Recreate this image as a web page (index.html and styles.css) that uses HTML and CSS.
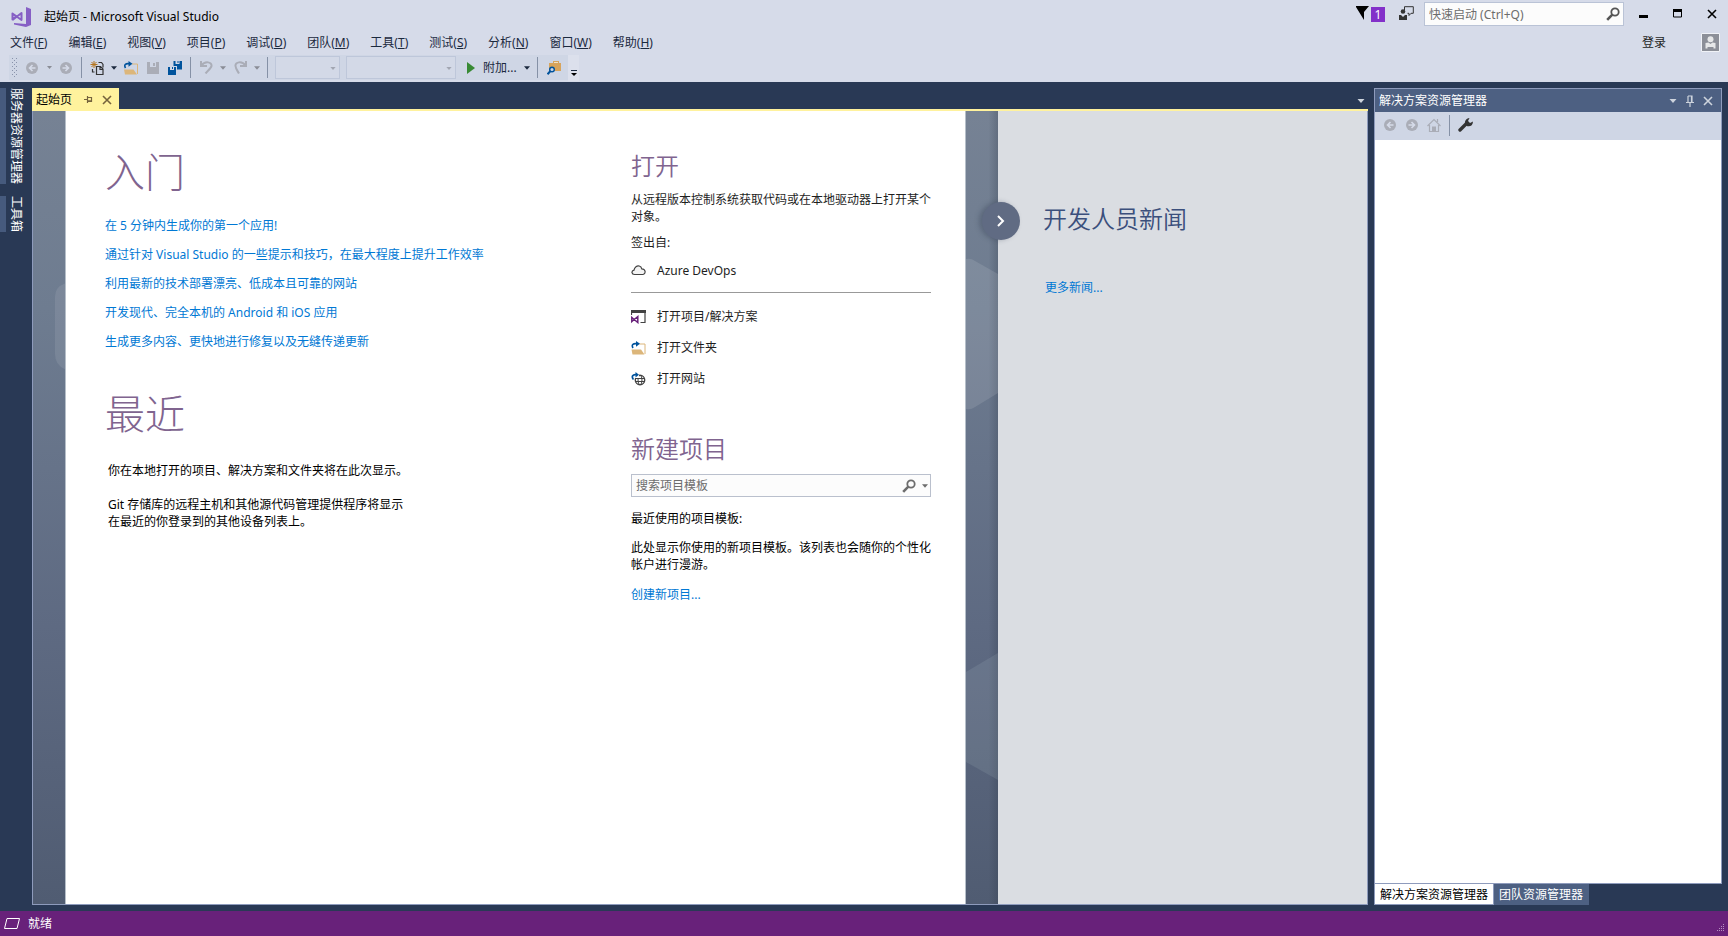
FILE: index.html
```html
<!DOCTYPE html>
<html lang="zh-CN">
<head>
<meta charset="utf-8">
<title>起始页 - Microsoft Visual Studio</title>
<link rel="stylesheet" href="styles.css">
</head>
<body>
<svg class="defs" width="0" height="0" aria-hidden="true">
  <symbol id="caret" viewBox="0 0 7 4"><path d="M0 0h7L3.500 4z" fill="currentColor"/></symbol>
  <symbol id="search" viewBox="0 0 14 14"><circle cx="9" cy="5" r="3.700" fill="none" stroke="currentColor" stroke-width="1.800"/><path d="M6.300 7.700L1.200 12.800" stroke="currentColor" stroke-width="2.600"/></symbol>
  <symbol id="back" viewBox="0 0 12 12"><circle cx="6" cy="6" r="6" fill="#aaadb7"/><path d="M6.500 3L3.500 6l3 3M3.500 6H9.500" fill="none" stroke="#d6dbe9" stroke-width="1.600"/></symbol>
  <symbol id="forward" viewBox="0 0 12 12"><circle cx="6" cy="6" r="6" fill="#aaadb7"/><path d="M5.500 3l3 3-3 3M8.500 6H2.500" fill="none" stroke="#d6dbe9" stroke-width="1.600"/></symbol>
  <symbol id="open-folder" viewBox="0 0 14 14"><path d="M8 3h5.500v10" fill="none" stroke="#dcb67a"/><path d="M0 8.500h9.500L13 13.500H1z" fill="#dcb67a"/><path d="M1.500 7C-.5 3.500 2 2.200 5.500 2.800" fill="none" stroke="#00539c" stroke-width="1.600"/><path d="M4.500 0l4 2.800-4 3z" fill="#00539c"/></symbol>
  <symbol id="close" viewBox="0 0 10 10"><path d="M1 1l8 8M9 1L1 9" fill="none" stroke="currentColor" stroke-width="1.600"/></symbol>
  <symbol id="pin" viewBox="0 0 8 12"><path d="M2 1h4v6M2 1v6M5.500 1v6M0 7.500h8M4 8v4" fill="none" stroke="currentColor" stroke-width="1.200"/></symbol>
</svg>

<header class="header">
  <div class="title-row">
    <svg class="logo" width="20" height="20" viewBox="0 0 20 20"><path d="M15 0l5 2v16l-5 2-12-2.500V16l12 1z" fill="#865fc5"/><path d="M1.500 6.500v6l3.500-3zM1.500 6.500l9 6.500V6l-9 7" fill="none" stroke="#865fc5" stroke-width="2" stroke-linejoin="round"/></svg>
    <span class="app-title">起始页 - Microsoft Visual Studio</span>
    <button class="plain flag" aria-label="通知"><svg width="13" height="14" viewBox="0 0 13 14"><path d="M0 0h13L8 6v8L0 1z"/></svg><span class="badge">1</span></button>
    <button class="plain feedback" aria-label="反馈"><svg width="15" height="15" viewBox="0 0 15 15"><path d="M5.500 4V.700h8.800v6.600H12l-2 2.200V7.300H8.500" fill="none" stroke="#333"/><circle cx="4" cy="5.500" r="2.300" fill="#333"/><path d="M0 9h2l2 2 2-2h2v5H0z" fill="#333"/></svg></button>
    <label class="quick"><input type="text" placeholder="快速启动 (Ctrl+Q)" aria-label="快速启动"><svg width="14" height="14"><use href="#search"/></svg></label>
    <div class="window-buttons">
      <button class="plain" aria-label="最小化"><svg width="10" height="10"><path d="M0 6h9v3H0z"/></svg></button>
      <button class="plain" aria-label="最大化"><svg width="10" height="10"><path d="M.5 1h8v7h-8z" fill="none" stroke="#000"/><path d="M0 0h9v3H0z"/></svg></button>
      <button class="plain" aria-label="关闭"><svg width="10" height="10"><use href="#close"/></svg></button>
    </div>
  </div>
  <div class="menu-row">
    <nav class="menu">
      <button>文件(<u>F</u>)</button><button>编辑(<u>E</u>)</button><button>视图(<u>V</u>)</button><button>项目(<u>P</u>)</button><button>调试(<u>D</u>)</button><button>团队(<u>M</u>)</button><button>工具(<u>T</u>)</button><button>测试(<u>S</u>)</button><button>分析(<u>N</u>)</button><button>窗口(<u>W</u>)</button><button>帮助(<u>H</u>)</button>
    </nav>
    <button class="plain sign-in">登录</button>
    <svg class="avatar" width="19" height="19" viewBox="0 0 19 19"><path d="M.5.500h18v18H.5z" fill="#8c8f98" stroke="#f0f2f7"/><circle cx="9.500" cy="6.200" r="3" fill="#e6e7e8"/><path d="M4.500 15.500V10l3-.5 2 1.500 2-1.500 3 .5v5.500h-2V14h-6v1.500z" fill="#e6e7e8"/></svg>
  </div>
  <div class="toolbar-row">
    <div class="toolbar">
      <svg class="grip" width="5" height="20"><path d="M.5 0v20M4.500 0v20M2.500 2v18" stroke="#8993ab" stroke-dasharray="1 3"/></svg>
      <button class="tool" aria-label="后退"><svg width="12" height="12"><use href="#back"/></svg></button>
      <button class="drop dim" aria-label="后退列表"><svg width="5" height="3"><use href="#caret"/></svg></button>
      <button class="tool" aria-label="前进"><svg width="12" height="12"><use href="#forward"/></svg></button>
      <i class="sep"></i>
      <button class="tool" aria-label="新建"><svg width="14" height="14" viewBox="0 0 14 14"><path d="M4 0v7M.5 3.500h7M1.500 1l5 5M6.500 1l-5 5" stroke="#b5751e"/><path d="M8.500 1.500h3l1.500 2v3M2.500 8v3h2M6.500 5.500h4l2.500 2.500v5.500H6.500zM10 6v2.500h3" fill="none" stroke="#333" stroke-width="1.200"/></svg></button>
      <button class="drop" aria-label="新建列表"><svg width="6" height="4"><use href="#caret"/></svg></button>
      <button class="tool" aria-label="打开"><svg width="14" height="14"><use href="#open-folder"/></svg></button>
      <button class="tool" aria-label="保存"><svg width="12" height="12"><path d="M0 0h12v12H0z" fill="#aaadb7"/><path d="M3 0h6v5H3z" fill="#cfd6e5"/><path d="M3 8h6v4H3z" fill="#aaadb7"/><path d="M6 1h2v3H6z" fill="#aaadb7"/></svg></button>
      <button class="tool" aria-label="全部保存"><svg width="14" height="14"><path d="M5.500 0H14v8.500H9V5H5.500zM0 6h8v8H0z" fill="#00539c"/><path d="M7.500 0h4v3h-4zM2 6h4v3H2z" fill="#cfd6e5"/><path d="M9.500 0h1v2h-1zM4 6h1v2H4z" fill="#00539c"/></svg></button>
      <i class="sep"></i>
      <button class="tool" aria-label="撤消"><svg width="13" height="13"><path d="M1 0v5h6M1.500 4.500C5-.500 12 1 11.500 5c-.3 2-3 4-6 7.500" fill="none" stroke="#aaadb7" stroke-width="2"/></svg></button>
      <button class="drop dim" aria-label="撤消列表"><svg width="6" height="4"><use href="#caret"/></svg></button>
      <button class="tool" aria-label="重做"><svg width="13" height="13"><path d="M12 0v5H6M11.500 4.500C8-.500 1 1 1.500 5c.2 2.500 1.500 4 3.500 7.500" fill="none" stroke="#aaadb7" stroke-width="2"/></svg></button>
      <button class="drop dim" aria-label="重做列表"><svg width="6" height="4"><use href="#caret"/></svg></button>
      <i class="sep"></i>
      <span class="combo narrow"><select disabled aria-label="解决方案配置"></select><svg width="6" height="3"><use href="#caret"/></svg></span>
      <span class="combo wide"><select disabled aria-label="解决方案平台"></select><svg width="6" height="3"><use href="#caret"/></svg></span>
      <button class="attach"><svg width="8" height="12"><path d="M0 0l8 6-8 6z" fill="#388a34"/></svg>附加...</button>
      <button class="drop" aria-label="附加列表"><svg width="6" height="4"><use href="#caret"/></svg></button>
      <i class="sep"></i>
      <button class="tool find" aria-label="在文件中查找"><svg width="14" height="14"><path d="M2 2h4V0h6v2h2v8H2z" fill="#d8a45c"/><path d="M7 1.500h4" stroke="#f1e3c8"/><circle cx="5" cy="8.500" r="2.300" fill="#cfd6e5" stroke="#00539c" stroke-width="1.400"/><path d="M3.500 10L.5 13.300" stroke="#00539c" stroke-width="2"/></svg></button>
    </div>
    <button class="overflow" aria-label="工具栏选项"><svg width="6" height="6"><path d="M0 .500h6" stroke="#1b293e"/><path d="M0 3h6L3 6z"/></svg></button>
  </div>
</header>

<div class="workspace">
  <aside class="dock">
    <button>服务器资源管理器</button>
    <button>工具箱</button>
  </aside>

  <main class="document">
    <div class="tabs">
      <div class="tab">
        <span>起始页</span>
        <button class="plain" aria-label="固定"><svg width="9" height="7"><path d="M0 3.500h3M3.500 0v7M3.500 1.500h4v4h-4M3.500 4.800h4" fill="none" stroke="#75633d" stroke-width="1.200"/></svg></button>
        <button class="plain" aria-label="关闭"><svg width="10" height="10"><use href="#close"/></svg></button>
      </div>
      <button class="plain tab-list" aria-label="文档列表"><svg width="8" height="4"><use href="#caret"/></svg></button>
    </div>
    <div class="canvas">
      <div class="gutter">
        <svg width="33" height="300"><path d="M34 172q-12 3-12 14v57q0 12 12 16z" fill="#fff" opacity=".09"/></svg>
      </div>
      <div class="page">
        <div class="column">
          <h1>入门</h1>
          <ul class="links">
            <li><a href="#">在 5 分钟内生成你的第一个应用!</a></li>
            <li><a href="#">通过针对 Visual Studio 的一些提示和技巧，在最大程度上提升工作效率</a></li>
            <li><a href="#">利用最新的技术部署漂亮、低成本且可靠的网站</a></li>
            <li><a href="#">开发现代、完全本机的 Android 和 iOS 应用</a></li>
            <li><a href="#">生成更多内容、更快地进行修复以及无缝传递更新</a></li>
          </ul>
          <h1 class="recent">最近</h1>
          <div class="recent-text">
            <p>你在本地打开的项目、解决方案和文件夹将在此次显示。</p>
            <p>Git 存储库的远程主机和其他源代码管理提供程序将显示<br>在最近的你登录到的其他设备列表上。</p>
          </div>
        </div>
        <div class="column side">
          <h2>打开</h2>
          <p class="intro">从远程版本控制系统获取代码或在本地驱动器上打开某个对象。</p>
          <p>签出自:</p>
          <button class="item azure"><svg width="15" height="11" viewBox="0 0 15 11"><path d="M3.500 9.500C.5 9.500 0 6 3 5.200 3.500 2 6 .500 8.200 1c1.600.4 2.300 1.600 2.600 2.800C15 4 15 9 12 9.500z" fill="#f3f3f3" stroke="#424242" stroke-width="1.200"/></svg>Azure DevOps</button>
          <hr>
          <div class="items">
            <button class="item"><svg width="15" height="14"><path d="M.500 5V1.500M14 1.500v11H9.500" fill="none" stroke="#424242" stroke-width="1.200"/><path d="M0 0h15v3H0z" fill="#424242"/><path d="M.8 7.500v4l2.200-2zM.8 7.500l6 5v-6l-6 5" fill="none" stroke="#68217a" stroke-width="1.500"/></svg>打开项目/解决方案</button>
            <button class="item"><svg width="15" height="14"><use href="#open-folder"/></svg>打开文件夹</button>
            <button class="item"><svg width="15" height="14"><circle cx="9" cy="8" r="4.700" fill="none" stroke="#424242" stroke-width="1.400"/><ellipse cx="9" cy="8" rx="2" ry="4.700" fill="none" stroke="#424242"/><path d="M4 6.500h10M4 9.500h10" stroke="#424242"/><path d="M0 0h8v6H0z" fill="#fff"/><path d="M2.500 7.500C0 4.500 2 2.300 5 2.700" fill="none" stroke="#00539c" stroke-width="1.700"/><path d="M4.500 0l3.500 2.700-3.500 2.700z" fill="#00539c"/></svg>打开网站</button>
          </div>
          <h2 class="new">新建项目</h2>
          <label class="template"><input type="text" placeholder="搜索项目模板" aria-label="搜索项目模板"><svg width="14" height="14"><use href="#search"/></svg><svg width="6" height="4"><use href="#caret"/></svg></label>
          <p>最近使用的项目模板:</p>
          <p class="roam">此处显示你使用的新项目模板。该列表也会随你的个性化帐户进行漫游。</p>
          <a class="create" href="#">创建新项目...</a>
        </div>
      </div>
      <div class="gutter right">
        <svg width="32" height="700"><path d="M0 148q5-1 9 2l23 13v119L9 296q-4 3-9 2z" fill="#fff" opacity=".11"/><path d="M0 561l32-19v127L0 651z" fill="#cfe0e0" opacity=".11"/></svg>
      </div>
      <section class="news">
        <button class="collapse" aria-label="折叠新闻"><svg width="8" height="12"><path d="M1 1l5 5-5 5" fill="none" stroke="#fff" stroke-width="2"/></svg></button>
        <h2>开发人员新闻</h2>
        <a href="#">更多新闻...</a>
      </section>
    </div>
  </main>

  <aside class="explorer">
    <div class="explorer-frame">
      <div class="explorer-title">
        <span>解决方案资源管理器</span>
        <button class="plain" aria-label="窗口位置"><svg width="8" height="4"><use href="#caret"/></svg></button>
        <button class="plain" aria-label="自动隐藏"><svg width="8" height="12"><use href="#pin"/></svg></button>
        <button class="plain" aria-label="关闭"><svg width="10" height="10"><use href="#close"/></svg></button>
      </div>
      <div class="explorer-tools">
        <button class="tool" aria-label="后退"><svg width="12" height="12"><use href="#back"/></svg></button>
        <button class="tool" aria-label="前进"><svg width="12" height="12"><use href="#forward"/></svg></button>
        <button class="tool" aria-label="主页"><svg width="14" height="14"><path d="M.5 8L7 1.500 13.500 8M2.500 7v6.500h9V7M10.500 4V1" fill="none" stroke="#aaadb7" stroke-width="1.200"/><path d="M5 8.500h4V13H5z" fill="#aaadb7"/></svg></button>
        <i class="sep"></i>
        <button class="tool" aria-label="属性"><svg width="15" height="14"><path d="M9 5L2 12" stroke="#333" stroke-width="3.400" stroke-linecap="round"/><path d="M11.500 0L10 3l2 2 3-1.500C15 8 11 9.500 8 7.500 5.500 4 8 0 11.500 0z" fill="#333"/></svg></button>
      </div>
      <div class="explorer-body"></div>
    </div>
    <div class="explorer-tabs">
      <button class="active">解决方案资源管理器</button><button>团队资源管理器</button>
    </div>
  </aside>
</div>

<footer class="status">
  <svg width="16" height="11"><path d="M3 .500h12.500L13 10.500H.500z" fill="none" stroke="#fff"/></svg>
  <span>就绪</span>
  <svg class="resize" width="8" height="8"><path d="M7.500 0v8M5.500 2v6M3.500 4v4M1.500 6v2" stroke="#b68fc0" stroke-dasharray="1 1"/></svg>
</footer>
</body>
</html>
```
FILE: styles.css
```css
* { box-sizing: border-box; }

body {
  margin: 0;
  height: 100vh;
  display: flex;
  flex-direction: column;
  font-family: "Noto Sans", "Noto Sans CJK SC", sans-serif;
  font-size: 12px;
  line-height: 17px;
  color: #1e1e1e;
  background: #293955;
  overflow: hidden;
}

.defs { position: absolute; }
svg { flex: none; display: block; }
h1, h2, p, ul { margin: 0; padding: 0; }
button {
  font: inherit;
  color: inherit;
  padding: 0;
  border: 0;
  background: none;
  white-space: nowrap;
}
input { font: inherit; border: 0; padding: 0; background: none; outline: 0; min-width: 0; flex: 1; }
input::placeholder { color: #6d6d6d; opacity: 1; }
a { color: #0078d4; text-decoration: none; }
.plain, .tool, .drop { display: flex; align-items: center; justify-content: center; flex: none; }

/* Header */
.header { background: #d6dbe9; height: 82px; flex: none; color: #1b293e; }
.title-row { display: flex; align-items: center; height: 32px; padding: 0 11px; color: #000; }
.app-title { margin-left: 13px; flex: 1; }
.logo { margin-top: 2px; }
.flag { align-items: flex-start; gap: 2px; margin-bottom: 4px; }
.badge {
  width: 14px;
  height: 15px;
  margin-top: 1px;
  line-height: 15px;
  color: #fff;
  background: #8330c9;
}
.feedback { margin: 0 10px 6px 14px; }
.quick {
  display: flex;
  align-items: center;
  width: 200px;
  height: 24px;
  margin-bottom: 4px;
  padding: 0 3px 0 4px;
  border: 1px solid #bac3d6;
  background: #fcfcfc;
  color: #555;
}
.window-buttons { display: flex; gap: 24px; margin: 0 0 4px 15px; }
.menu-row { display: flex; align-items: center; height: 20px; padding: 0 8px 0 10px; }
.menu { display: flex; flex: 1; gap: 21px; }
.sign-in { color: #1e1e1e; }
.avatar { margin-left: 35px; }

.toolbar-row { display: flex; height: 27px; margin: 3px 0 0 9px; }
.toolbar { display: flex; align-items: center; height: 25px; padding: 0 2px 0 3px; background: #cfd6e5; }
.grip { margin-right: 4px; }
.tool { width: 22px; height: 22px; }
.drop { width: 12px; height: 22px; color: #1b293e; }
.dim { color: #8a8d96; }
.sep { width: 1px; height: 21px; margin: 0 4px; background: #8591a6; }
.combo { position: relative; height: 23px; margin-left: 3px; }
.combo + .combo { margin-left: 6px; }
.combo select {
  appearance: none;
  width: 100%;
  height: 100%;
  border: 1px solid #b8c2d6;
  background: #d6dbe9;
}
.combo svg { position: absolute; right: 4px; top: 11px; color: #a2a6b2; }
.narrow { width: 65px; }
.wide { width: 110px; }
.attach { display: flex; align-items: center; gap: 8px; margin: 0 4px 0 11px; }
.find { width: 24px; }
.overflow { width: 11px; height: 26px; padding: 9px 0 0 3px; background: #dce0ec; }

/* Workspace */
.workspace { display: flex; flex: 1; min-height: 0; padding: 6px 6px 6px 0; }
.dock { width: 32px; flex: none; display: flex; flex-direction: column; align-items: flex-start; gap: 12px; }
.dock button {
  writing-mode: vertical-rl;
  text-orientation: sideways;
  width: 27px;
  color: #fff;
  border-left: 6px solid #465a7d;
  text-align: start;
}

.document { flex: 1; min-width: 0; display: flex; flex-direction: column; }
.tabs { display: flex; justify-content: space-between; height: 23px; flex: none; border-bottom: 2px solid #fff29d; }
.tab { display: flex; align-items: center; height: 23px; padding: 0 7px 0 4px; color: #000; background: #fff29d; }
.tab button { margin-left: 12px; color: #75633d; }
.tab button + button { margin-left: 9px; }
.tab-list { color: #ced4dd; padding: 4px 3px 0 0; }
.canvas {
  flex: 1;
  min-height: 0;
  display: flex;
  border: 1px solid #8e9bbc;
  border-top: 0;
  background: linear-gradient(#768294, #6e7c90 25%, #5e6a82 65%, #505c72);
}
.gutter { width: 32px; flex: none; overflow: hidden; }
.gutter.right { background: linear-gradient(90deg, transparent 70%, rgba(40, 50, 65, .25)); }
.page {
  flex: 1;
  min-width: 0;
  display: grid;
  grid-template-columns: 1fr 300px;
  align-items: start;
  padding: 37px 34px 0 39px;
  background: #fff;
  border: solid #b6bfc9;
  border-width: 0 1px;
}
h1, h2 { color: #80648f; }
h1 { font-size: 40px; line-height: 48px; font-weight: 300; }
h2 { font-size: 24px; line-height: 32px; font-weight: 350; }
.links { list-style: none; margin-top: 15px; }
.links li { line-height: 29px; }
.recent { margin-top: 34px; }
.recent-text { margin: 24px 0 0 3px; color: #000; }
.recent-text p + p { margin-top: 17px; }

.side { padding-top: 2px; }
.side p { margin-top: 9px; }
.item { display: flex; align-items: center; gap: 11px; height: 31px; }
.azure { height: 20px; margin-top: 9px; }
hr { margin: 12px 0 0; border: 0; border-top: 1px solid #999; }
.items { margin-top: 8px; }
.new { margin: 39px 0 9px; }
.template {
  display: flex;
  align-items: center;
  gap: 6px;
  height: 23px;
  padding: 0 2px 0 4px;
  border: 1px solid #bac0cd;
  background: #fcfcfc;
  color: #6d6d6d;
}
.side .template + p { margin-top: 13px; color: #000; }
.side .roam { margin-top: 12px; color: #000; }
.create { display: block; margin-top: 13px; }

.news { position: relative; flex: 0 0 369px; padding: 92px 0 0 45px; background: #dadde2; }
.news h2 { color: #3b4f7c; }
.news a { display: block; margin: 44px 0 0 2px; }
.collapse {
  position: absolute;
  left: -16px;
  top: 91px;
  display: flex;
  align-items: center;
  justify-content: center;
  width: 38px;
  height: 38px;
  border-radius: 50%;
  background: #606b83;
  box-shadow: -3px 0 5px rgba(50, 60, 80, .35);
}

/* Solution explorer */
.explorer { width: 348px; flex: none; margin-left: 6px; display: flex; flex-direction: column; }
.explorer-frame { flex: 1; display: flex; flex-direction: column; border: 1px solid #8e9bbc; background: #fff; }
.explorer-title {
  display: flex;
  align-items: center;
  height: 23px;
  padding: 0 8px 0 4px;
  gap: 9px;
  color: #fff;
  background: #4d6082;
}
.explorer-title span { flex: 1; }
.explorer-title button { color: #ced4dd; }
.explorer-tools { display: flex; align-items: center; height: 28px; padding: 0 0 2px 4px; background: #cfd6e5; }
.explorer-tabs { display: flex; height: 21px; flex: none; }
.explorer-tabs button {
  height: 21px;
  padding: 0 6px 0 5px;
  color: #fff;
  background: #4d6082;
  border-left: 1px solid #8e9bbc;
}
.explorer-tabs .active {
  padding: 0 5px;
  color: #000;
  background: #fff;
  border: 1px solid #8e9bbc;
  border-width: 0 0 1px 1px;
}

/* Status bar */
.status { display: flex; align-items: center; gap: 8px; height: 25px; flex: none; padding: 0 4px; color: #fff; background: #68217a; }
.resize { margin: 8px 0 0 auto; }
```
